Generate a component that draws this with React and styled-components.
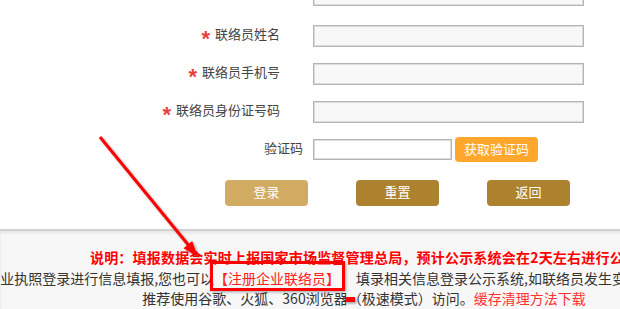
import React from 'react';
import styled, { createGlobalStyle } from 'styled-components';

const Global = createGlobalStyle`
  html, body { margin: 0; padding: 0; background: #fff; overflow: hidden; }
  body { font-family: "Noto Sans CJK SC", "Microsoft YaHei", sans-serif; }
`;

const Page = styled.div`
  position: relative;
  width: 728px;
  height: 309px;
  display: flex;
  flex-direction: column;
  overflow: hidden;
`;

const Form = styled.div`
  display: flex;
  flex-direction: column;
  gap: 16px;
  margin-top: -16px;
`;

const Row = styled.div`
  display: grid;
  grid-template-columns: 280px 271px;
  column-gap: 33px;
  align-items: center;
  height: 22px;
`;

const Label = styled.label`
  display: flex;
  justify-content: flex-end;
  align-items: center;
  gap: 5px;
  font-size: 13px;
  line-height: 13px;
  padding-bottom: ${p => p.$pb || '5px'};
  color: #444;
  white-space: nowrap;
  width: ${p => p.$width || 'auto'};
`;

const Star = styled.span`
  color: #e8413c;
  font-family: "Liberation Sans", sans-serif;
  font-weight: bold;
  font-size: 22px;
  line-height: 1;
  transform: translateY(6px);
`;

const Input = styled.input`
  box-sizing: border-box;
  width: ${p => p.$width || '100%'};
  height: ${p => p.$height || '22px'};
  background: ${p => p.$bg || '#f8f8f8'};
  border: 1px solid #b4b4b4;
  box-shadow: inset 0 0 0 1px #dcdcdc;
  margin: 0;
  margin-left: ${p => p.$ml || '0'};
  padding: 0 6px;
  outline: none;
`;

const CodeRow = styled.div`
  display: flex;
  align-items: center;
  height: 25px;
  margin-top: 1px;
`;

const CodeButton = styled.button`
  width: 83px;
  height: 25px;
  margin-left: 3px;
  border: none;
  border-radius: 4px;
  background: #ffa72c;
  color: #fff;
  font-family: inherit;
  font-size: 13px;
  line-height: 13px;
  padding: 0 0 2px;
`;

const ButtonRow = styled.div`
  display: flex;
  gap: 48px;
  padding-left: 225px;
  margin-top: 2px;
`;

const ActionButton = styled.button`
  width: 83px;
  height: 26px;
  border: none;
  border-radius: 4px;
  background: ${p => (p.$light ? '#d2ab63' : '#ad822f')};
  color: #fff;
  font-family: inherit;
  font-size: 13px;
  line-height: 13px;
  padding: 0 0 3px;
`;

const Footer = styled.div`
  flex: 1;
  margin-top: 23px;
  background: #f7f7f7;
  border-top: 2px solid #d2d2d2;
  box-shadow: inset 0 2px 3px rgba(0, 0, 0, 0.08);
  padding-top: 16px;
  display: flex;
  flex-direction: column;
  align-items: center;
`;

const Line = styled.div`
  white-space: nowrap;
  line-height: 20px;
  font-size: 14px;
  color: ${p => (p.$notice ? '#ff0000' : '#333')};
  font-weight: ${p => (p.$notice ? 'bold' : 'normal')};
  letter-spacing: ${p => (p.$notice ? '0.2px' : '0')};
  margin-top: ${p => p.$mt || '0'};
`;

const Link = styled.span`
  position: relative;
  color: #ff2020;
  margin-right: 16px;
  &::after {
    content: '';
    position: absolute;
    left: -4px;
    right: -5px;
    top: -7px;
    bottom: -3px;
    border: 3px solid #ff0000;
    box-shadow: 1px 1px 3px rgba(0, 0, 0, 0.35);
  }
`;

const RedText = styled.span`
  color: #ff3030;
`;

const Annotation = styled.svg`
  position: absolute;
  left: 0;
  top: 0;
  width: 620px;
  height: 309px;
  pointer-events: none;
  overflow: visible;
`;

const fields = ['联络员姓名', '联络员手机号', '联络员身份证号码'];

export default function App() {
  return (
    <>
      <Global />
      <Page>
        <Form>
          <Row>
            <Label />
            <Input />
          </Row>
          {fields.map(f => (
            <Row key={f}>
              <Label>
                <Star>*</Star>
                {f}
              </Label>
              <Input />
            </Row>
          ))}
          <CodeRow>
            <Label $width="303px" $pb="4px">验证码</Label>
            <Input $width="139px" $height="21px" $bg="#fff" $ml="10px" />
            <CodeButton>获取验证码</CodeButton>
          </CodeRow>
          <ButtonRow>
            <ActionButton $light>登录</ActionButton>
            <ActionButton>重置</ActionButton>
            <ActionButton>返回</ActionButton>
          </ButtonRow>
        </Form>
        <Footer>
          <Line $notice>说明：填报数据会实时上报国家市场监督管理总局，预计公示系统会在2天左右进行公示</Line>
          <Line $mt="1px">
            企业可凭营业执照登录进行信息填报,您也可以<Link>【注册企业联络员】</Link>填录相关信息登录公示系统,如联络员发生变更,请及时修改联络员信息。
          </Line>
          <Line>
            推荐使用谷歌、火狐、360浏览器（极速模式）访问。<RedText>缓存清理方法下载</RedText>
          </Line>
        </Footer>
        <Annotation viewBox="0 0 620 309">
          <defs>
            <filter id="sh" x="-20%" y="-20%" width="140%" height="140%">
              <feDropShadow dx="1.5" dy="1.5" stdDeviation="1.2" floodColor="#000" floodOpacity="0.35" />
            </filter>
          </defs>
          <g filter="url(#sh)" fill="#ff0000">
            <line x1="100" y1="137" x2="190" y2="247" stroke="#ff0000" strokeWidth="3" />
            <polygon points="198,257 183.5,248.2 192.2,241" />
            <rect x="345" y="297" width="10" height="5" />
          </g>
        </Annotation>
      </Page>
    </>
  );
}
